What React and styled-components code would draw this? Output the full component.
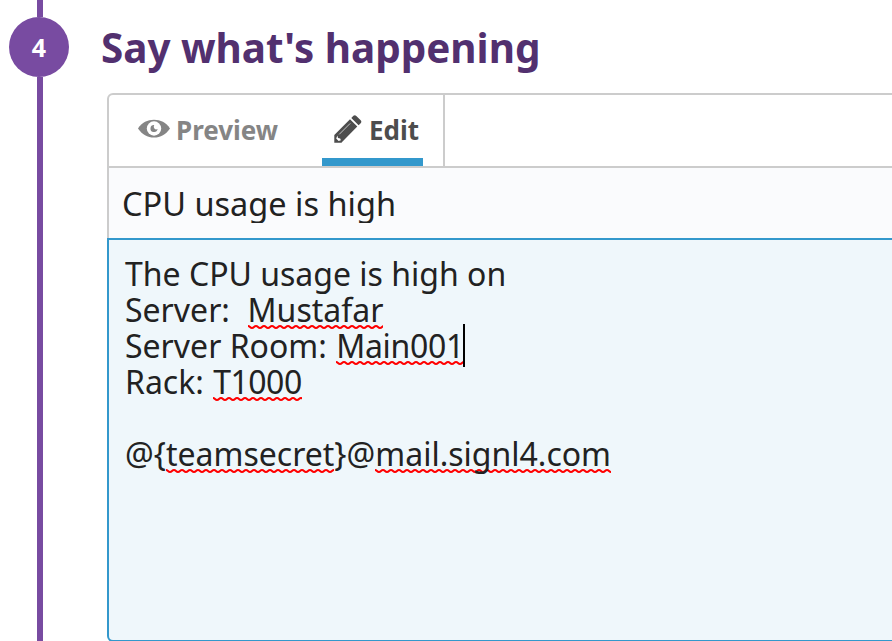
import React from 'react';
import styled, { createGlobalStyle } from 'styled-components';

const wave = `url("data:image/svg+xml,%3Csvg xmlns='http://www.w3.org/2000/svg' width='8' height='4'%3E%3Cpath d='M-4 3C-2 3-2 1 0 1S2 3 4 3 6 1 8 1s2 2 4 2' fill='none' stroke='%23f00' stroke-width='2'/%3E%3C/svg%3E")`;

const GlobalStyle = createGlobalStyle`
  * { box-sizing: border-box; }
  body { margin: 0; background: #fff; overflow: hidden; font-family: "Noto Sans", sans-serif; }
`;
const Page = styled.main`
  display: grid;
  grid-template-columns: 107px 1fr;
  width: 892px;
  height: 641px;
  overflow: hidden;
`;
const Rail = styled.aside`
  display: flex;
  flex-direction: column;
  align-items: center;
  width: 80px;
  height: 641px;
`;
const RailLine = styled.div`
  width: 6px;
  height: ${(p) => p.$height || 'auto'};
  flex: ${(p) => (p.$height ? 'none' : 1)};
  background: #784ba1;
`;
const StepBadge = styled.div`
  width: 60px;
  height: 60px;
  margin-right: 2px;
  border-radius: 50%;
  background: #784ba1;
  color: #fff;
  font-size: 25px;
  font-weight: 700;
  line-height: 60px;
  text-align: center;
`;
const Content = styled.section`
  display: flex;
  flex-direction: column;
  min-width: 0;
`;
const Title = styled.h2`
  height: 93px;
  margin: 0 0 0 -6px;
  color: #52306f;
  font-size: 40.4px;
  font-weight: 700;
  line-height: 95px;
  white-space: nowrap;
`;
const Editor = styled.div`
  display: flex;
  flex-direction: column;
  flex: none;
  width: 820px;
  height: 549px;
`;
const Tabs = styled.div`
  display: flex;
  flex: none;
  height: 75px;
  border: 2px solid #ccc;
  border-radius: 6px 0 0;
`;
const TabGroup = styled.div`
  display: flex;
  width: 336px;
  border-right: 2px solid #ccc;
`;
const Tab = styled.div`
  display: flex;
  align-items: center;
  width: ${(p) => p.$width};
  margin-left: ${(p) => p.$offset};
  padding-top: 6px;
  padding-left: ${(p) => p.$pad};
  border-bottom: 8px solid ${(p) => (p.$active ? '#3398cc' : 'transparent')};
  color: ${(p) => (p.$active ? '#4d4d4d' : '#858585')};
  font-size: 26px;
  font-weight: 700;
  line-height: 36px;
  white-space: nowrap;
  svg { flex: none; margin-right: ${(p) => p.$gap}; margin-bottom: 2px; }
`;
const Subject = styled.div`
  flex: none;
  height: 70px;
  padding: 13px 13px 0;
  border-left: 2px solid #ccc;
  background: #fafbfd;
  color: #222;
  font-size: 32.5px;
  line-height: 46px;
`;
const SubjectText = styled.div`
  height: 42px;
  overflow: hidden;
`;
const Message = styled.div`
  flex: none;
  height: 404px;
  padding: 16px 16px;
  border: 2px solid #3398cc;
  border-radius: 0 0 0 6px;
  background: #eff7fb;
  color: #222;
  font-size: 32px;
  line-height: 36px;
  white-space: pre;
`;
const Line = styled.div`
  height: 36px;
`;
const Misspelled = styled.span`
  display: inline-block;
  height: 37px;
  margin-left: ${(p) => p.$nudge || 0};
  letter-spacing: ${(p) => p.$tracking || 'normal'};
  background: ${wave} 0 100% repeat-x;
`;
const Caret = styled.span`
  display: inline-block;
  width: 2px;
  height: 43px;
  margin: -4px 0 -3px -1px;
  vertical-align: top;
  background: #000;
`;

const Eye = () => (
  <svg width="32" height="20" viewBox="0 0 32 20">
    <path d="M0 9.5C4 3.500 9.500.8 16 .8S28 3.500 32 9.500C28 15.500 22.500 18.600 16 18.600S4 15.500 0 9.500z" fill="#858585" />
    <circle cx="16" cy="9.500" r="7.200" fill="#fff" />
    <path d="M16.200 5.900a3.600 3.600 0 1 0 3.400 4.200q-2 .9-3.200-.5-1.300-1.500-.2-3.700z" fill="#858585" />
  </svg>
);
const Pencil = () => (
  <svg width="28" height="28" viewBox="0 0 28 28" fill="#4d4d4d">
    <path d="M17.300 2.900 19.400.8Q20.900-.5 22.300.9L26.700 5.300Q28 6.700 26.700 8.200L24.600 10.200z" />
    <path d="M16 4.200 23.300 11.500 8.300 26.700 7.500 27.700H.3V20.100z" />
    <path d="M5.200 19.400 16.200 8.400" stroke="#d0d0d0" strokeWidth=".9" />
    <path d="m3.400 20.600.6 2.300 2.200.6.700 1.700-2.300.8-2.400-2.500z" fill="#fff" />
  </svg>
);

export default function App() {
  return (
    <>
      <GlobalStyle />
      <Page>
        <Rail>
          <RailLine $height="17px" />
          <StepBadge>4</StepBadge>
          <RailLine />
        </Rail>
        <Content>
          <Title>Say what's happening</Title>
          <Editor>
            <Tabs>
              <TabGroup>
                <Tab $width="150px" $offset="29px" $gap="6px"><Eye />Preview</Tab>
                <Tab $active $width="101px" $offset="34px" $pad="12px" $gap="7px"><Pencil />Edit</Tab>
              </TabGroup>
            </Tabs>
            <Subject><SubjectText>CPU usage is high</SubjectText></Subject>
            <Message>
              <Line>The CPU usage is high on</Line>
              <Line>Server:  <Misspelled $nudge="1px">Mustafar</Misspelled></Line>
              <Line>Server Room: <Misspelled $nudge="1px" $tracking="-.27px">Main001</Misspelled><Caret /></Line>
              <Line>Rack: <Misspelled $nudge="1px" $tracking="-.5px">T1000</Misspelled></Line>
              <Line />
              <Line>@&#123;<Misspelled>teamsecret</Misspelled>&#125;@<Misspelled>mail.signl4.com</Misspelled></Line>
            </Message>
          </Editor>
        </Content>
      </Page>
    </>
  );
}
